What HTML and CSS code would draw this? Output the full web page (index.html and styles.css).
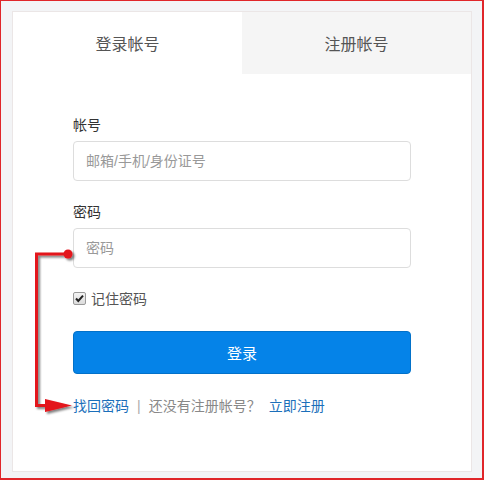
FILE: index.html
```html
<!DOCTYPE html>
<html lang="zh-CN">
<head>
  <meta charset="UTF-8" />
  <title>登录</title>
  <link rel="stylesheet" href="styles.css">
</head>
<body>
  <div class="frame">
    <div class="card">
      <div class="tabs">
        <div class="tab active">登录帐号</div>
        <div class="tab">注册帐号</div>
      </div>

      <form class="form">
        <label class="label">帐号</label>
        <input class="input" type="text" placeholder="邮箱/手机/身份证号" />

        <label class="label">密码</label>
        <input class="input" type="password" placeholder="密码" />

        <label class="remember">
          <span class="check">
            <svg viewBox="0 0 11 11" width="11" height="11">
              <path d="M2 5.5 L4.3 8 L9 2.6" fill="none" stroke="#222" stroke-width="2"/>
            </svg>
          </span>
          <span>记住密码</span>
        </label>

        <button class="btn" type="button">登录</button>

        <div class="links">
          <a href="#">找回密码</a>
          <span class="sep">|</span>
          <span class="muted">还没有注册帐号？</span>
          <a href="#">立即注册</a>
        </div>
      </form>
    </div>

    <!-- annotation arrow drawn over the screenshot -->
    <svg class="note" viewBox="0 0 484 480" width="484" height="480">
      <defs>
        <filter id="shadow" x="-20%" y="-20%" width="140%" height="140%">
          <feDropShadow dx="2" dy="2" stdDeviation="1.2" flood-color="#000" flood-opacity="0.5"/>
        </filter>
      </defs>
      <g filter="url(#shadow)" fill="#e3141b" stroke="#e3141b">
        <polyline points="68,254 36.5,254 36.5,405.5 50,405.5" fill="none" stroke-width="3"/>
        <circle cx="68" cy="254" r="4.5" stroke="none"/>
        <polygon points="45,399 72,405.5 45,412" stroke="none"/>
      </g>
    </svg>
  </div>
</body>
</html>
```

FILE: styles.css
```css
body {
  margin: 0;
  font-family: "Liberation Sans", "Noto Sans CJK SC", sans-serif;
}

.frame {
  position: relative;
  width: 484px;
  height: 480px;
  box-sizing: border-box;
  border: 1px solid #e0262a;
  border-right-width: 2px;
  border-bottom-width: 2px;
  background-color: #f3f4f6;
  padding: 10px 11px;
}

.card {
  width: 460px;
  height: 461px;
  box-sizing: border-box;
  background: #fff;
  border: 1px solid #ebe6e6;
}

.tabs {
  display: flex;
  height: 62px;
}

.tab {
  flex: 1;
  display: flex;
  align-items: center;
  justify-content: center;
  font-size: 16px;
  color: #555;
  background: #f5f5f5;
}

.tab.active {
  background: #fff;
}

.form {
  display: flex;
  flex-direction: column;
  padding: 41px 60px 0 60px;
}

.label {
  font-size: 14px;
  line-height: 20px;
  color: #333;
  margin-bottom: 6px;
}

.input {
  height: 40px;
  box-sizing: border-box;
  border: 1px solid #ddd;
  border-radius: 4px;
  padding: 0 12px;
  font-family: inherit;
  font-size: 14px;
  color: #333;
  margin-bottom: 21px;
}

.input::placeholder {
  color: #999;
}

.remember {
  display: flex;
  align-items: center;
  gap: 5px;
  height: 20px;
  margin-top: -1px;
  font-size: 14px;
  color: #555;
}

.check {
  display: flex;
  align-items: center;
  justify-content: center;
  width: 11px;
  height: 11px;
  border: 1px solid #9a9a9a;
  border-radius: 2px;
  background: linear-gradient(#f4f4f4, #dcdcdc);
}

.btn {
  margin-top: 23px;
  height: 43px;
  border: 1px solid #0271c9;
  border-radius: 4px;
  background: #0583e8;
  color: #fff;
  font-family: inherit;
  font-size: 15px;
}

.links {
  margin-top: 22px;
  line-height: 20px;
  font-size: 14px;
  display: flex;
  gap: 8px;
}

.links a {
  color: #1b6fba;
  text-decoration: none;
}

.sep {
  color: #aaa;
}

.muted {
  color: #888;
}

.note {
  position: absolute;
  left: -1px;
  top: -1px;
  pointer-events: none;
}
```
